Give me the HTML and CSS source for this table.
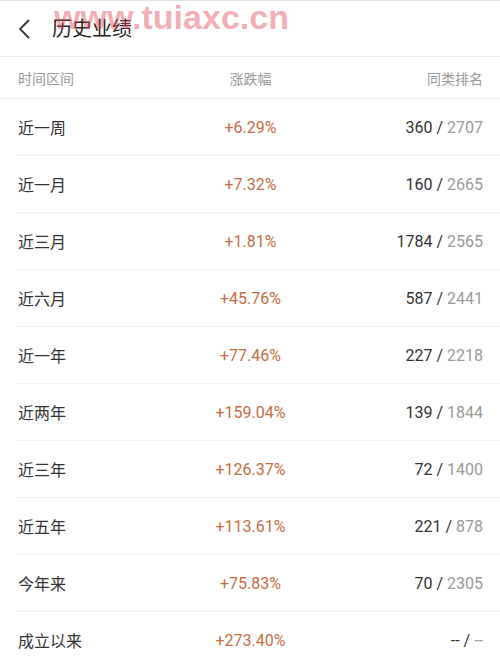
FILE: index.html
```html
<!DOCTYPE html>
<html lang="zh">
<head>
<meta charset="utf-8">
<link rel="stylesheet" href="styles.css">
</head>
<body>
<div class="page">
  <header class="topbar">
    <svg class="back" width="14" height="22" viewBox="0 0 14 22"><path d="M12 2 L3 11 L12 20" fill="none" stroke="#333" stroke-width="1.8"/></svg>
    <h1 class="title">历史业绩</h1>
    <div class="watermark">www.tuiaxc.cn</div>
  </header>
  <div class="thead">
    <span class="c1">时间区间</span>
    <span class="c2">涨跌幅</span>
    <span class="c3">同类排名</span>
  </div>
  <div class="rows">
    <div class="row"><span class="c1">近一周</span><span class="c2 pct">+6.29%</span><span class="c3"><b>360</b> / <i>2707</i></span></div>
    <div class="row"><span class="c1">近一月</span><span class="c2 pct">+7.32%</span><span class="c3"><b>160</b> / <i>2665</i></span></div>
    <div class="row"><span class="c1">近三月</span><span class="c2 pct">+1.81%</span><span class="c3"><b>1784</b> / <i>2565</i></span></div>
    <div class="row"><span class="c1">近六月</span><span class="c2 pct">+45.76%</span><span class="c3"><b>587</b> / <i>2441</i></span></div>
    <div class="row"><span class="c1">近一年</span><span class="c2 pct">+77.46%</span><span class="c3"><b>227</b> / <i>2218</i></span></div>
    <div class="row"><span class="c1">近两年</span><span class="c2 pct">+159.04%</span><span class="c3"><b>139</b> / <i>1844</i></span></div>
    <div class="row"><span class="c1">近三年</span><span class="c2 pct">+126.37%</span><span class="c3"><b>72</b> / <i>1400</i></span></div>
    <div class="row"><span class="c1">近五年</span><span class="c2 pct">+113.61%</span><span class="c3"><b>221</b> / <i>878</i></span></div>
    <div class="row"><span class="c1">今年来</span><span class="c2 pct">+75.83%</span><span class="c3"><b>70</b> / <i>2305</i></span></div>
    <div class="row"><span class="c1">成立以来</span><span class="c2 pct">+273.40%</span><span class="c3"><b>--</b> / <i>--</i></span></div>
  </div>
</div>
</body>
</html>
```
FILE: styles.css
```css
* { box-sizing: border-box; margin: 0; padding: 0; }
html, body { background: #fff; }
body { font-family: Roboto, "Noto Sans CJK SC", sans-serif; color: #333; width: 500px; height: 668px; overflow: hidden; }
.page { width: 500px; }
.topbar {
  position: relative;
  height: 57px;
  border-top: 1px solid #e2e2e2;
  border-bottom: 1px solid #ececec;
  display: flex;
  align-items: center;
  padding-left: 17px;
}
.back { display: block; margin-right: 21px; }
.title { font-size: 20px; font-weight: 400; color: #222; line-height: 1; }
.watermark {
  position: absolute;
  left: 54px;
  top: 0;
  font-family: "Liberation Sans", Arial, sans-serif;
  font-weight: 700;
  font-size: 34px;
  line-height: 33px;
  color: rgba(230, 70, 90, 0.45);
  pointer-events: none;
  white-space: nowrap;
}
.thead {
  height: 42px;
  display: grid;
  grid-template-columns: 1fr 1fr 1fr;
  align-items: center;
  padding: 0 17px 0 18px;
  font-size: 14px;
  color: #999;
  border-bottom: 1px solid #ececec;
}
.c1 { text-align: left; }
.c2 { text-align: center; }
.c3 { text-align: right; }
.row {
  height: 57px;
  display: grid;
  grid-template-columns: 1fr 1fr 1fr;
  align-items: center;
  margin-left: 17px;
  padding: 0 17px 0 1px;
  border-bottom: 1px solid #f0f0f0;
  font-size: 16px;
  color: #333;
}
.row .c2 { font-size: 16px; }
.row .c3 { font-size: 16px; }
.pct { color: #c66c44; }
.row b { font-weight: 400; color: #333; }
.row i { font-style: normal; color: #9a9a9a; }
```
